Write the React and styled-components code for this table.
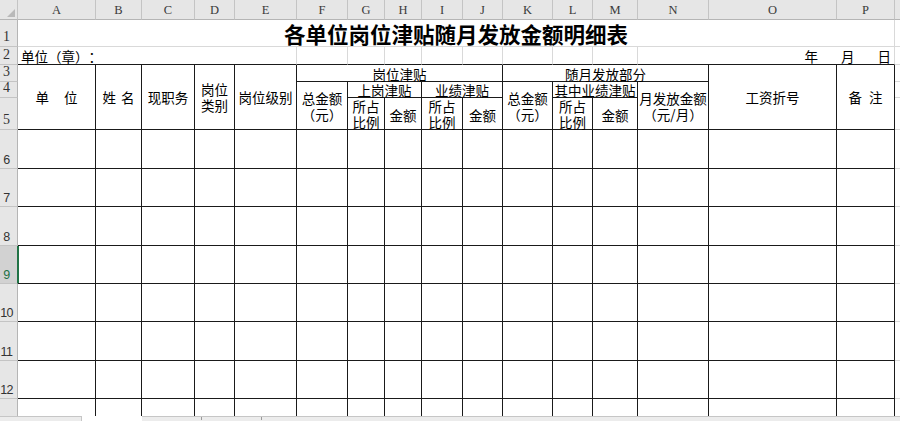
import React from 'react';
import styled, { createGlobalStyle, css } from 'styled-components';

const GlobalStyle = createGlobalStyle`
  html, body { margin: 0; padding: 0; background: #fff; overflow: hidden; }
  body {
    font-family: "Noto Sans CJK SC", "Liberation Sans", sans-serif;
    text-spacing-trim: space-all;
  }
`;

const COLS = [
  ['A', 78], ['B', 46], ['C', 53], ['D', 40], ['E', 62], ['F', 51], ['G', 37], ['H', 37],
  ['I', 41], ['J', 40], ['K', 50], ['L', 40], ['M', 45], ['N', 71], ['O', 128], ['P', 58], ['', 80],
];
const ROWS = [27, 18, 17, 16, 32, 39, 38, 39, 38, 38, 39, 38, 38];

const HEAD_BG = '#e6e6e6';
const HEAD_LINE = '#c4c4c4';
const FAINT = '#d9d9d9';
const INK = '#1a1a1a';
const GREEN = '#217346';

const Window = styled.div`
  width: 900px;
  height: 421px;
  overflow: hidden;
  display: flex;
  flex-direction: column;
  background: #fff;
`;

const Sheet = styled.div`
  flex: none;
  height: 416px;
  overflow: hidden;
  display: grid;
  grid-template-columns: 18px ${COLS.map((c) => c[1] + 'px').join(' ')};
  grid-template-rows: 20px ${ROWS.map((r) => r + 'px').join(' ')};
`;

const place = css`
  grid-column: ${(p) => p.$c} / span ${(p) => p.$cs || 1};
  grid-row: ${(p) => p.$r} / span ${(p) => p.$rs || 1};
  box-sizing: border-box;
  min-width: 0;
`;

const Corner = styled.div`
  ${place}
  background: ${HEAD_BG};
  border-right: 1px solid ${HEAD_LINE};
  border-bottom: 1px solid #b5b5b5;
  display: flex;
  align-items: flex-end;
  justify-content: flex-end;
  svg { display: block; }
`;

const ColHead = styled.div`
  ${place}
  background: ${HEAD_BG};
  border-right: 1px solid ${HEAD_LINE};
  border-bottom: 1px solid #b5b5b5;
  display: flex;
  align-items: center;
  justify-content: center;
  font-family: "Liberation Serif", serif;
  font-size: 12.5px;
  color: #3a3a3a;
  padding-top: 1px;
`;

const RowHead = styled.div`
  ${place}
  background: ${(p) => (p.$active ? '#d2d2d2' : HEAD_BG)};
  border-right: 1px solid ${(p) => (p.$active ? GREEN : '#b5b5b5')};
  border-bottom: 1px solid ${HEAD_LINE};
  display: flex;
  align-items: flex-end;
  justify-content: center;
  padding: 0 5px 2px 1px;
  overflow: visible;
  white-space: nowrap;
  line-height: 1;
  color: ${(p) => (p.$active ? GREEN : '#333')};
  font-family: ${(p) => (p.$serif ? '"Liberation Serif", serif' : '"Liberation Sans", sans-serif')};
  font-size: ${(p) => (p.$serif ? '14px' : '12.5px')};
  letter-spacing: ${(p) => (p.$serif ? '0' : '-0.6px')};
`;

const GridCell = styled.div`
  ${place}
  border-right: 1px solid ${(p) => (p.$noRight ? 'transparent' : FAINT)};
  border-bottom: 1px solid ${(p) => (p.$inkBottom ? INK : FAINT)};
`;

const TitleCell = styled(GridCell)`
  display: flex;
  align-items: center;
  justify-content: center;
  font-size: 21.5px;
  font-weight: 700;
  color: #000;
  white-space: nowrap;
  padding-top: 1px;
`;

const NoteCell = styled(GridCell)`
  display: flex;
  align-items: center;
  justify-content: ${(p) => (p.$end ? 'flex-end' : 'flex-start')};
  gap: 23px;
  padding: 0 3px 0 3px;
  font-size: 13.5px;
  color: #000;
  white-space: nowrap;
`;

const TableCell = styled.div`
  ${place}
  border-right: 1px solid ${INK};
  border-bottom: 1px solid ${(p) => (p.$open ? 'transparent' : INK)};
  box-shadow: ${(p) => (p.$selected ? `inset 1px 0 0 ${GREEN}` : 'none')};
  display: flex;
  flex-direction: column;
  align-items: center;
  justify-content: center;
  text-align: center;
  font-size: 13.5px;
  line-height: 16px;
  color: #000;
  white-space: nowrap;
  padding-top: ${(p) => (p.$low ? '2px' : '0')};
  ${(p) =>
    p.$tracking &&
    css`
      letter-spacing: ${p.$tracking}px;
      padding-left: ${p.$tracking}px;
    `}
`;

const BottomBar = styled.div`
  flex: 1;
  display: flex;
`;

const TabNav = styled.div`
  width: 82px;
  box-sizing: border-box;
  background: #ececec;
  border-top: 1px solid #c6c6c6;
  border-right: 1px solid #c6c6c6;
`;

const ActiveTab = styled.div`
  width: 60px;
  background: #fff;
`;

const TabRest = styled.div`
  flex: 1;
  display: flex;
  background: #ececec;
  border-top: 1px solid #c6c6c6;
  padding-left: 59px;
  gap: 59px;
`;

const Tick = styled.span`
  width: 1px;
  height: 3px;
  background: #9a9a9a;
`;

const SelectAll = () => (
  <Corner $c={1} $r={1}>
    <svg width="12" height="12" viewBox="0 0 12 12">
      <polygon points="2,10 10,10 10,2" fill="#b9b9b9" />
    </svg>
  </Corner>
);

const headerCells = [
  { c: 2, r: 4, rs: 3, t: ['单位'], tracking: 15 },
  { c: 3, r: 4, rs: 3, t: ['姓名'], tracking: 5 },
  { c: 4, r: 4, rs: 3, t: ['现职务'] },
  { c: 5, r: 4, rs: 3, t: ['岗位', '类别'] },
  { c: 6, r: 4, rs: 3, t: ['岗位级别'] },
  { c: 7, r: 4, cs: 5, t: ['岗位津贴'], low: true },
  { c: 7, r: 5, rs: 2, t: ['总金额', '（元）'] },
  { c: 8, r: 5, cs: 2, t: ['上岗津贴'] },
  { c: 10, r: 5, cs: 2, t: ['业绩津贴'] },
  { c: 8, r: 6, t: ['所占', '比例'] },
  { c: 9, r: 6, t: ['金额'], low: true },
  { c: 10, r: 6, t: ['所占', '比例'] },
  { c: 11, r: 6, t: ['金额'], low: true },
  { c: 12, r: 4, cs: 4, t: ['随月发放部分'], low: true },
  { c: 12, r: 5, rs: 2, t: ['总金额', '（元）'] },
  { c: 13, r: 5, cs: 2, t: ['其中业绩津贴'] },
  { c: 13, r: 6, t: ['所占', '比例'] },
  { c: 14, r: 6, t: ['金额'], low: true },
  { c: 15, r: 5, rs: 2, t: ['月发放金额', '（元/月）'] },
  { c: 16, r: 4, rs: 3, t: ['工资折号'] },
  { c: 17, r: 4, rs: 3, t: ['备注'], tracking: 7 },
];

const DATA_ROWS = [6, 7, 8, 9, 10, 11, 12, 13];
const SELECTED_ROW = 9;

export default function App() {
  return (
    <>
      <GlobalStyle />
      <Window>
        <Sheet>
          <SelectAll />
          {COLS.map(([name], i) => (
            <ColHead key={i} $c={i + 2} $r={1}>
              {name}
            </ColHead>
          ))}
          {ROWS.map((_, i) => (
            <RowHead key={i} $c={1} $r={i + 2} $serif={i < 5} $active={i + 1 === SELECTED_ROW}>
              {i < 12 ? i + 1 : ''}
            </RowHead>
          ))}

          {/* Row 1: title */}
          <TitleCell $c={2} $cs={16} $r={2}>各单位岗位津贴随月发放金额明细表</TitleCell>
          <GridCell $c={18} $r={2} />

          {/* Row 2 */}
          <NoteCell $c={2} $cs={5} $r={3} $inkBottom>单位（章）：</NoteCell>
          {[7, 8, 9, 10, 11, 12, 13, 14].map((c) => (
            <GridCell key={c} $c={c} $r={3} $inkBottom />
          ))}
          <NoteCell $c={15} $cs={3} $r={3} $inkBottom $end>
            <span>年</span>
            <span>月</span>
            <span>日</span>
          </NoteCell>
          <GridCell $c={18} $r={3} />

          {/* Rows 3-5: column headings */}
          {headerCells.map((h, i) => (
            <TableCell key={i} $c={h.c} $r={h.r} $cs={h.cs} $rs={h.rs} $tracking={h.tracking} $low={h.low}>
              {h.t.map((line, j) => (
                <span key={j}>{line}</span>
              ))}
            </TableCell>
          ))}
          {[4, 5, 6].map((r) => (
            <GridCell key={r} $c={18} $r={r} />
          ))}

          {/* Data rows */}
          {DATA_ROWS.map((row) => (
            <React.Fragment key={row}>
              {COLS.slice(0, 16).map(([name], i) => (
                <TableCell
                  key={name}
                  $c={i + 2}
                  $r={row + 1}
                  $open={row === 13}
                  $selected={row === SELECTED_ROW && i === 0}
                />
              ))}
              <GridCell $c={18} $r={row + 1} />
            </React.Fragment>
          ))}
        </Sheet>
        <BottomBar>
          <TabNav />
          <ActiveTab />
          <TabRest>
            <Tick />
            <Tick />
          </TabRest>
        </BottomBar>
      </Window>
    </>
  );
}
